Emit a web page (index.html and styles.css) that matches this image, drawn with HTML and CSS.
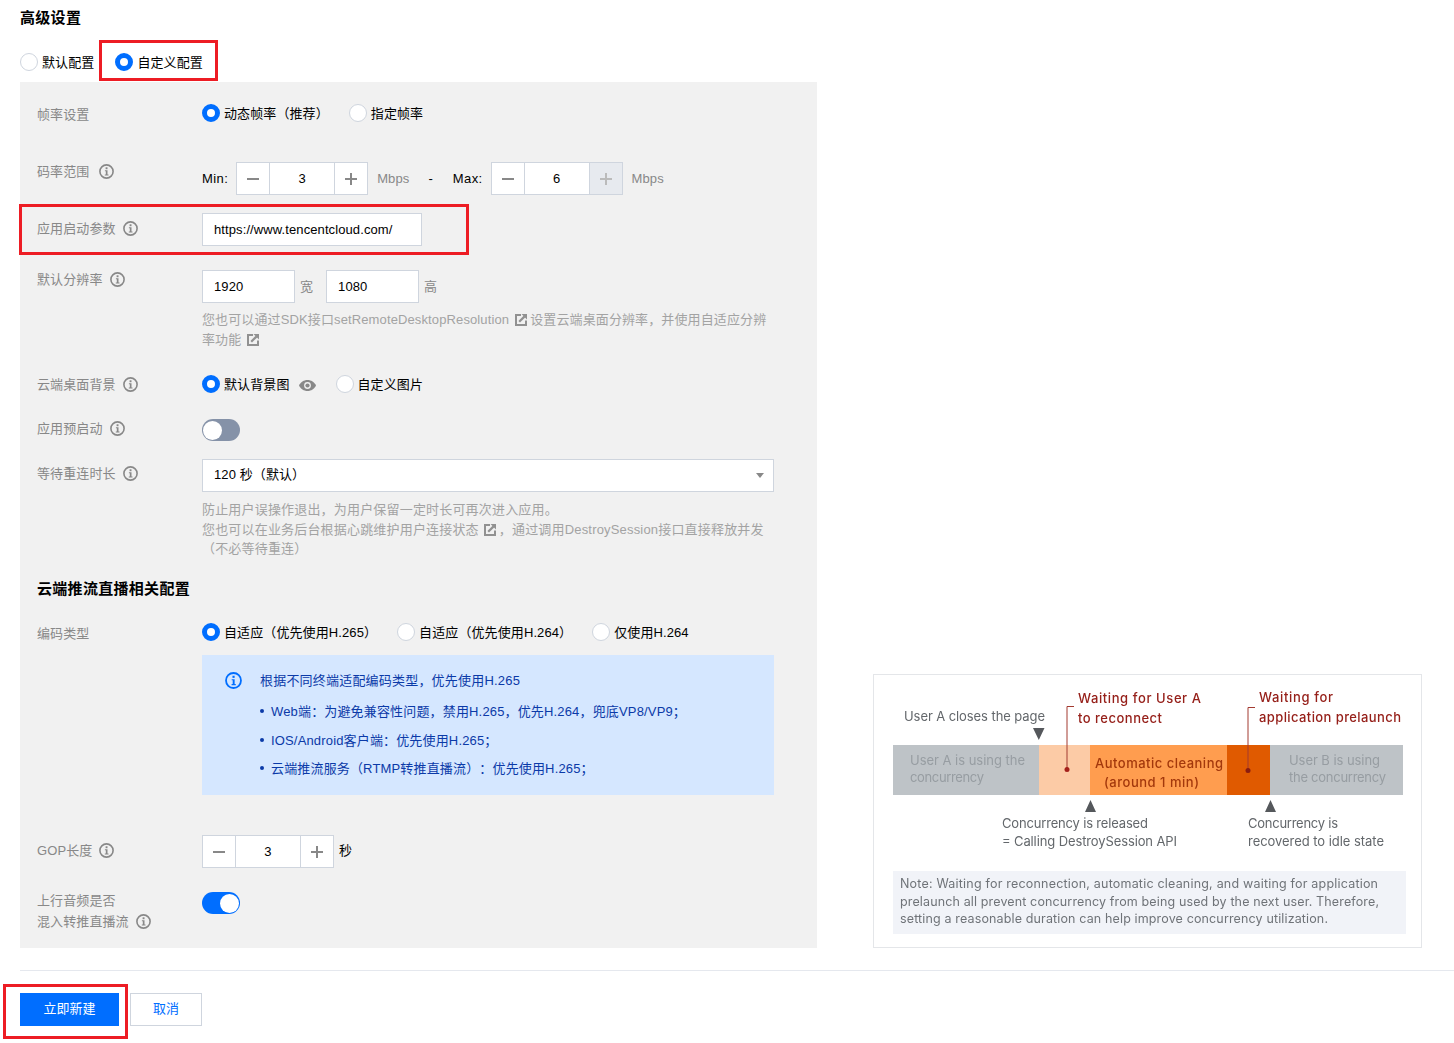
FILE: index.html
```html
<!DOCTYPE html>
<html lang="zh-CN">
<head>
<meta charset="utf-8">
<title>高级设置</title>
<link rel="stylesheet" href="styles.css">
</head>
<body>
<svg class="defs" aria-hidden="true">
  <symbol id="i-info" viewBox="0 0 15 15"><circle cx="7.5" cy="7.5" r="6.6" fill="none" stroke="currentColor" stroke-width="1.6"/><rect x="6.6" y="3.3" width="1.9" height="1.9" fill="currentColor"/><path d="M5.900 6.300h2.600v4.300h1v1H5.800v-1h1V7.300H5.900z" fill="currentColor"/></symbol>
  <symbol id="i-link" viewBox="0 0 12 12"><path d="M6 1H1v10h10V6.500" fill="none" stroke="currentColor" stroke-width="2"/><path d="M4.200 7.800 9.600 2.400" fill="none" stroke="currentColor" stroke-width="2.200"/><path d="M6.500 0H12v5.500z" fill="currentColor"/></symbol>
  <symbol id="i-minus" viewBox="0 0 12 12"><rect y="5" width="12" height="2" fill="currentColor"/></symbol>
  <symbol id="i-plus" viewBox="0 0 12 12"><path d="M0 5h5V0h2v5h5v2H7v5H5V7H0z" fill="currentColor"/></symbol>
</svg>

<main class="page">
  <h2 class="page-title">高级设置</h2>
  <div class="radios radios-top">
    <span class="radio"><i class="dot"></i>默认配置</span>
    <span class="radio mark mark-custom"><i class="dot on"></i>自定义配置</span>
  </div>

  <div class="content">
    <section class="panel">
      <div class="row row-frame">
        <div class="label lp2">帧率设置</div>
        <div class="control radios">
          <span class="radio"><i class="dot on"></i>动态帧率（推荐）</span>
          <span class="radio"><i class="dot"></i>指定帧率</span>
        </div>
      </div>

      <div class="row row-bitrate">
        <div class="label lp1">码率范围<svg class="info wide"><use href="#i-info"/></svg></div>
        <div class="control cp1 inline">
          <span class="limit">Min:</span>
          <div class="stepper">
            <span class="step"><svg class="sym"><use href="#i-minus"/></svg></span><span class="num">3</span><span class="step"><svg class="sym"><use href="#i-plus"/></svg></span>
          </div>
          <span class="unit">Mbps</span>
          <span class="dash">-</span>
          <span class="limit">Max:</span>
          <div class="stepper">
            <span class="step"><svg class="sym"><use href="#i-minus"/></svg></span><span class="num">6</span><span class="step off"><svg class="sym"><use href="#i-plus"/></svg></span>
          </div>
          <span class="unit">Mbps</span>
        </div>
      </div>

      <div class="row row-param mark mark-param">
        <div class="label lp6">应用启动参数<svg class="info"><use href="#i-info"/></svg></div>
        <div class="control"><div class="field field-url">https://www.tencentcloud.com/</div></div>
      </div>

      <div class="row row-res">
        <div class="label lp1">默认分辨率<svg class="info"><use href="#i-info"/></svg></div>
        <div class="control cp1">
          <div class="inline">
            <div class="field field-size">1920</div><span class="suffix">宽</span>
            <div class="field field-size">1080</div><span class="suffix">高</span>
          </div>
          <p class="hint hint-res">您也可以通过SDK接口setRemoteDesktopResolution<svg class="ext"><use href="#i-link"/></svg>设置云端桌面分辨率，并使用自适应分辨<br>率功能<svg class="ext"><use href="#i-link"/></svg></p>
        </div>
      </div>

      <div class="row row-bg">
        <div class="label lp1">云端桌面背景<svg class="info"><use href="#i-info"/></svg></div>
        <div class="control radios">
          <span class="radio"><i class="dot on"></i>默认背景图
            <svg class="eye" viewBox="0 0 17 11"><path d="M8.500 0C4.800 0 1.600 2.200 0 5.500 1.600 8.800 4.800 11 8.500 11S15.400 8.800 17 5.500C15.400 2.200 12.200 0 8.500 0Z" fill="currentColor"/><circle cx="8.500" cy="5.500" r="3.400" fill="#f1f1f1"/><circle cx="8.500" cy="5.500" r="2.100" fill="currentColor"/></svg>
          </span>
          <span class="radio"><i class="dot"></i>自定义图片</span>
        </div>
      </div>

      <div class="row row-pre">
        <div class="label lp1">应用预启动<svg class="info"><use href="#i-info"/></svg></div>
        <div class="control cp1"><span class="toggle"></span></div>
      </div>

      <div class="row row-wait">
        <div class="label lp5">等待重连时长<svg class="info"><use href="#i-info"/></svg></div>
        <div class="control">
          <div class="field field-select">120 秒（默认）<i class="caret"></i></div>
          <p class="hint hint-wait">防止用户误操作退出，为用户保留一定时长可再次进入应用。<br>您也可以在业务后台根据心跳维护用户连接状态<svg class="ext"><use href="#i-link"/></svg>，通过调用DestroySession接口直接释放并发<br>（不必等待重连）</p>
        </div>
      </div>

      <h3 class="section-title">云端推流直播相关配置</h3>

      <div class="row row-codec">
        <div class="label lp2">编码类型</div>
        <div class="control">
          <div class="radios">
            <span class="radio"><i class="dot on"></i>自适应（优先使用H.265）</span>
            <span class="radio"><i class="dot"></i>自适应（优先使用H.264）</span>
            <span class="radio"><i class="dot"></i>仅使用H.264</span>
          </div>
          <div class="notice">
            <svg class="notice-icon"><use href="#i-info"/></svg>
            <div>
              <p class="notice-head">根据不同终端适配编码类型，优先使用H.265</p>
              <ul class="notice-list">
                <li>Web端：为避免兼容性问题，禁用H.265，优先H.264，兜底VP8/VP9；</li>
                <li>IOS/Android客户端：优先使用H.265；</li>
                <li>云端推流服务（RTMP转推直播流）：优先使用H.265；</li>
              </ul>
            </div>
          </div>
        </div>
      </div>

      <div class="row row-gop">
        <div class="label lp6">GOP长度<svg class="info"><use href="#i-info"/></svg></div>
        <div class="control inline">
          <div class="stepper">
            <span class="step"><svg class="sym"><use href="#i-minus"/></svg></span><span class="num">3</span><span class="step"><svg class="sym"><use href="#i-plus"/></svg></span>
          </div>
          <span class="sec">秒</span>
        </div>
      </div>

      <div class="row row-audio">
        <div class="label label-two">上行音频是否<br>混入转推直播流<svg class="info"><use href="#i-info"/></svg></div>
        <div class="control cp2"><span class="toggle toggle-on"></span></div>
      </div>
    </section>

    <figure class="diagram">
      <svg class="diagram-svg" width="549" height="274" viewBox="873 674 549 274">
        <rect x="873.500" y="674.500" width="548" height="273" fill="#fff" stroke="#e4e6e9"/>
        <rect x="893" y="745" width="146" height="50" fill="#bec3c7"/>
        <rect x="1039" y="745" width="51" height="50" fill="#fccba6"/>
        <rect x="1090" y="745" width="137" height="50" fill="#ff9d4f"/>
        <rect x="1227" y="745" width="43" height="50" fill="#e05a00"/>
        <rect x="1270" y="745" width="133" height="50" fill="#bec3c7"/>
        <path d="M1074 706.500h-7v63M1255 707.500h-7v63" fill="none" stroke="#a33a30"/>
        <circle cx="1067" cy="769.500" r="2.500" fill="#a5201a"/>
        <circle cx="1248" cy="770.500" r="2.500" fill="#8a1c10"/>
        <path d="M1033 728h11.500l-5.700 12zM1085 812h11l-5.500-12zM1265 812h11l-5.500-12z" fill="#55585c"/>

        <text class="d-grey" x="904" y="721" textLength="141">User A closes the page</text>
        <text class="d-red" x="1078" y="703" textLength="123">Waiting for User A</text>
        <text class="d-red" x="1078" y="723" textLength="84">to reconnect</text>
        <text class="d-red" x="1259" y="702" textLength="74">Waiting for</text>
        <text class="d-red" x="1259" y="722" textLength="142">application prelaunch</text>
        <text class="d-soft" x="910" y="765" textLength="115">User A is using the</text>
        <text class="d-soft" x="910" y="782" textLength="74">concurrency</text>
        <text class="d-brown" x="1095" y="768" textLength="128">Automatic cleaning</text>
        <text class="d-brown" x="1104" y="787" textLength="95">(around 1 min)</text>
        <text class="d-soft" x="1289" y="765" textLength="91">User B is using</text>
        <text class="d-soft" x="1289" y="782" textLength="97">the concurrency</text>
        <text class="d-grey" x="1002" y="828" textLength="146">Concurrency is released</text>
        <text class="d-grey" x="1002" y="846" textLength="175">= Calling DestroySession API</text>
        <text class="d-grey" x="1248" y="828" textLength="90">Concurrency is</text>
        <text class="d-grey" x="1248" y="846" textLength="136">recovered to idle state</text>

        <rect x="893" y="871" width="513" height="63" fill="#f1f3f8"/>
        <text class="d-note" x="900" y="888" textLength="478">Note: Waiting for reconnection, automatic cleaning, and waiting for application</text>
        <text class="d-note" x="900" y="906" textLength="479">prelaunch all prevent concurrency from being used by the next user. Therefore,</text>
        <text class="d-note" x="900" y="923" textLength="428">setting a reasonable duration can help improve concurrency utilization.</text>
      </svg>
    </figure>
  </div>

  <footer class="actions">
    <button class="btn btn-primary mark mark-submit" type="button">立即新建</button>
    <button class="btn btn-ghost" type="button">取消</button>
  </footer>
</main>
</body>
</html>
```

FILE: styles.css
```css
*, *::before, *::after { box-sizing: border-box; }

html, body { margin: 0; padding: 0; background: #fff; }

body {
  font-family: "Liberation Sans", "Noto Sans CJK SC", sans-serif;
  font-size: 13px;
  line-height: 20px;
  letter-spacing: .1px;
  text-spacing-trim: space-all;
  color: #000;
  overflow: hidden;
  height: 1043px;
}

.defs { position: absolute; width: 0; height: 0; }

.page { padding: 8px 0 0 20px; }

.page-title {
  margin: 0;
  font-size: 15px;
  line-height: 20px;
  letter-spacing: .3px;
  font-weight: 700;
  color: #000;
}

.radios { display: flex; gap: 20px; }
.radios-top { gap: 21px; margin-top: 24px; margin-bottom: 10px; }

.radio {
  display: inline-flex;
  align-items: flex-start;
  gap: 4px;
  height: 20px;
  padding-top: 1px;
  white-space: nowrap;
}

.dot {
  width: 18px;
  height: 18px;
  flex: none;
  border-radius: 50%;
  background: #fff;
  border: 1px solid #cfd5de;
}
.dot.on { border: 5px solid #006eff; }

/* red annotation frames laid over the form */
.mark { position: relative; }
.mark::after {
  content: "";
  position: absolute;
  border: 3px solid #ed1c24;
  pointer-events: none;
}
.mark-custom::after { left: -16px; top: -12px; width: 119px; height: 41px; }
.mark-param::after { left: -18px; top: -9px; width: 450px; height: 51px; }
.mark-submit::after { left: -18px; top: -10px; width: 125px; height: 55px; }

.content { display: flex; align-items: flex-end; gap: 56px; }

.panel {
  width: 797px;
  flex: none;
  background: #f1f1f1;
  padding: 21px 43px 16px 17px;
}

.row { display: flex; align-items: flex-start; }
.label { width: 165px; flex: none; color: #888; white-space: nowrap; }
.control { flex: 1; min-width: 0; }
.inline { display: flex; align-items: center; }

.lp1 { padding-top: 1px; }
.lp2 { padding-top: 2px; }
.lp5 { padding-top: 5px; }
.lp6 { padding-top: 6px; }
.cp1 { padding-top: 1px; }
.cp2 { padding-top: 2px; }

.row-bitrate { margin-top: 36px; }
.row-param { margin-top: 18px; }
.row-res { margin-top: 23px; }
.row-bg { margin-top: 24px; }
.row-pre { margin-top: 23px; }
.row-wait { margin-top: 18px; }
.row-codec { margin-top: 23px; }
.row-gop { margin-top: 40px; }
.row-audio { margin-top: 22px; }

.label-two { line-height: 21px; }

.info {
  width: 15px;
  height: 15px;
  margin-left: 7px;
  color: #888;
  vertical-align: -3px;
}
.info.wide { margin-left: 10px; }

.limit { letter-spacing: .4px; margin-right: 8px; }
.unit { color: #888; margin-left: 9px; }
.dash { margin: 0 20px 0 19px; }

.stepper {
  width: 132px;
  height: 33px;
  display: flex;
  flex: none;
  border: 1px solid #cfd5de;
  background: #fff;
}
.step {
  width: 33px;
  flex: none;
  display: flex;
  align-items: center;
  justify-content: center;
  color: #888;
}
.step:last-child { border-left: 1px solid #cfd5de; }
.step:first-child { border-right: 1px solid #cfd5de; }
.step.off { background: #e7eaef; color: #bbb; }
.sym { width: 12px; height: 12px; }
.num { flex: 1; text-align: center; line-height: 31px; }
.sec { margin-left: 5px; margin-top: -2px; }

.field {
  height: 33px;
  border: 1px solid #cfd5de;
  background: #fff;
  padding: 0 11px;
  line-height: 31px;
  white-space: nowrap;
}
.field-url { width: 220px; }
.field-size { width: 93px; }
.field-select { position: relative; width: 572px; line-height: 29px; }

.suffix { color: #888; margin: 0 13px 0 5px; }

.caret {
  position: absolute;
  right: 9px;
  top: 13px;
  border-style: solid;
  border-width: 5px 4.5px 0;
  border-color: #888 transparent transparent;
}

.hint { margin: 0; color: #a3a3a3; letter-spacing: .18px; white-space: nowrap; }
.hint-res { margin-top: 7px; letter-spacing: .12px; }
.hint-wait { margin-top: 8px; line-height: 19.5px; }

.ext {
  width: 12px;
  height: 12px;
  margin: 0 3px 0 5px;
  color: #919191;
  vertical-align: -2px;
}
.hint-res .ext { margin-left: 6px; }

.eye { width: 17px; height: 11px; margin: 5px 0 0 5px; color: #888; }

.toggle {
  display: block;
  position: relative;
  width: 38px;
  height: 22px;
  border-radius: 11px;
  background: #8592a8;
}
.toggle::after {
  content: "";
  position: absolute;
  left: 1px;
  top: 1.5px;
  width: 19px;
  height: 19px;
  border-radius: 50%;
  background: #fff;
}
.toggle-on { background: #006eff; }
.toggle-on::after { left: 18px; }

.section-title {
  margin: 20.5px 0 0;
  font-size: 15px;
  line-height: 20px;
  letter-spacing: .3px;
  font-weight: 700;
  color: #000;
}

.notice {
  display: flex;
  align-items: flex-start;
  gap: 18px;
  height: 140px;
  margin-top: 13px;
  padding: 16px 0 0 23px;
  background: #d5e7ff;
  color: #0b3aa8;
  letter-spacing: .2px;
}
.notice-icon { width: 17px; height: 17px; flex: none; margin-top: 1px; color: #006eff; }
.notice-head { margin: 0; }
.notice-list { margin: 11px 0 0; padding: 0; list-style: none; letter-spacing: .16px; }
.notice-list li { position: relative; padding-left: 11px; margin-bottom: 8.5px; }
.notice-list li::before {
  content: "";
  position: absolute;
  left: 0;
  top: 7px;
  width: 4px;
  height: 4px;
  border-radius: 50%;
  background: #0b3aa8;
}

.diagram { margin: 0; flex: none; height: 274px; }
.diagram-svg { display: block; filter: blur(.35px); }
.diagram-svg text { font-family: "Inter", sans-serif; font-size: 13px; letter-spacing: 0; }
.d-grey { fill: #63676b; }
.d-soft { fill: #979da2; }
.d-red { fill: #96201a; font-weight: 500; }
.d-brown { fill: #a3380c; font-weight: 500; }
.diagram-svg .d-note { fill: #6f7378; font-size: 12.5px; }

.actions {
  display: flex;
  gap: 11px;
  margin-top: 22px;
  padding-top: 22px;
  border-top: 1px solid #e5e8ee;
}

.btn {
  height: 33px;
  padding: 0 0 2px;
  font: inherit;
  border: 1px solid #cfd5de;
  background: #fff;
  color: #006eff;
}
.btn-primary { width: 99px; background: #006eff; border-color: #006eff; color: #fff; }
.btn-ghost { width: 72px; }
```
